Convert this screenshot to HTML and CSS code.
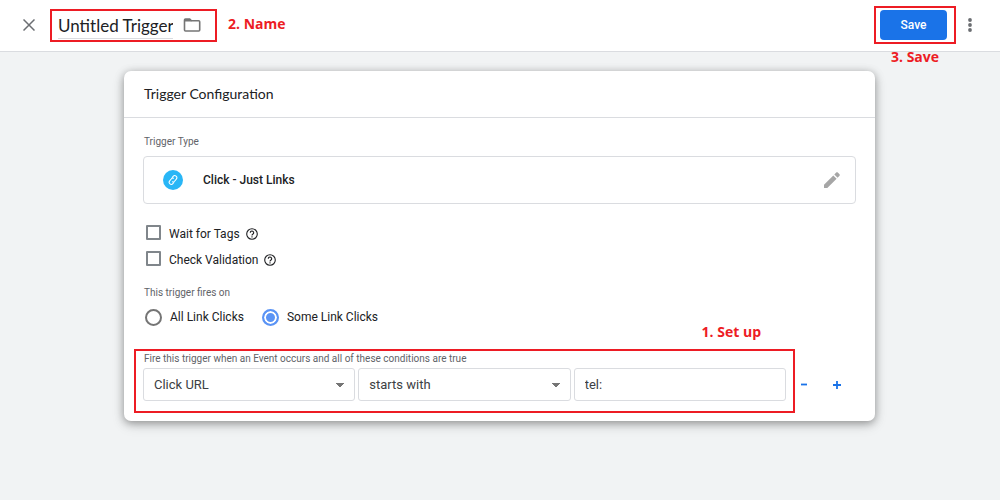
FILE: index.html
```html
<!DOCTYPE html>
<html lang="en">
<head>
    <meta charset="UTF-8">
    <meta name="viewport" content="width=device-width, initial-scale=1.0">
    <title>Untitled Trigger</title>
    <link rel="stylesheet" href="styles.css">
</head>
<body>
    <header class="topbar">
        <button class="icon-button close" type="button" aria-label="Close">
            <svg width="12" height="12" viewBox="0 0 12 12"><path d="M.5.5l11 11M11.500.5L.5 11.500" stroke="#6b6e72" stroke-width="1.500" fill="none"/></svg>
        </button>
        <div class="name-area">
            <input class="name-input" type="text" value="Untitled Trigger" aria-label="Trigger name">
            <button class="icon-button" type="button" aria-label="Choose folder">
                <svg width="18" height="14" viewBox="0 0 18 14"><path d="M1.500 12V2q0-1 1-1h4.200l1.700 1.800H15.700q1 0 1 1V12q0 1-1 1H2.500q-1 0-1-1z" stroke="#757575" stroke-width="1.600" fill="none"/><path d="M1.500 1H6.700l1.900 2.600H1.500z" fill="#757575"/></svg>
            </button>
            <span class="outline outline-name"></span>
            <span class="note note-name">2. Name</span>
        </div>
        <div class="save-area">
            <button class="save" type="button">Save</button>
            <span class="outline outline-save"></span>
            <span class="note note-save">3. Save</span>
        </div>
        <button class="icon-button more" type="button" aria-label="More options">
            <svg width="4" height="14" viewBox="0 0 4 14" fill="#6b6e72"><circle cx="2" cy="2" r="1.900"/><circle cx="2" cy="7" r="1.900"/><circle cx="2" cy="12" r="1.900"/></svg>
        </button>
    </header>

    <main class="card">
        <h1 class="card-title">Trigger Configuration</h1>
        <div class="card-body">
            <div class="label">Trigger Type</div>
            <div class="type-box">
                <svg width="20" height="20" viewBox="0 0 20 20">
                    <circle cx="10" cy="10" r="10" fill="#29b6f6"/>
                    <g transform="rotate(-50 10 10)" fill="none" stroke="#fff" stroke-width="1" stroke-linecap="round">
                        <path d="M11.800 9.300A2.100 2.100 0 0 0 10 8H7.200a2.100 2.100 0 0 0 0 4.200H8.600"/>
                        <path d="M8.200 10.700A2.100 2.100 0 0 0 10 12h2.800a2.100 2.100 0 0 0 0-4.200H11.400"/>
                    </g>
                </svg>
                <span class="type-name">Click - Just Links</span>
                <button class="icon-button" type="button" aria-label="Edit trigger type">
                    <svg width="16" height="16" viewBox="0 0 16 16" fill="#a6a6a6"><path d="M0 12.700V16h3.300L12.600 6.700 9.300 3.400zM15.500 3.800c.5-.5.5-1.100 0-1.600L13.800.5c-.5-.5-1.100-.5-1.600 0l-1.900 1.900 3.300 3.300z"/></svg>
                </button>
            </div>

            <div class="checks">
                <div class="option">
                    <input type="checkbox" id="wait">
                    <label for="wait">Wait for Tags</label>
                    <svg class="help" width="12" height="12" viewBox="0 0 12 12" fill="none" stroke="#202124" stroke-width="1.100"><circle cx="6" cy="6" r="5.300"/><path d="M4.300 4.800a1.700 1.700 0 1 1 2.700 1.300Q6 6.600 6 7.500M6 8.300v1.100"/></svg>
                </div>
                <div class="option">
                    <input type="checkbox" id="check">
                    <label for="check">Check Validation</label>
                    <svg class="help" width="12" height="12" viewBox="0 0 12 12" fill="none" stroke="#202124" stroke-width="1.100"><circle cx="6" cy="6" r="5.300"/><path d="M4.300 4.800a1.700 1.700 0 1 1 2.700 1.300Q6 6.600 6 7.500M6 8.300v1.100"/></svg>
                </div>
            </div>

            <div class="label">This trigger fires on</div>
            <div class="radios">
                <div class="option">
                    <input type="radio" name="fires" id="all">
                    <label for="all">All Link Clicks</label>
                </div>
                <div class="option">
                    <input type="radio" name="fires" id="some" checked>
                    <label for="some">Some Link Clicks</label>
                </div>
            </div>

            <div class="filter">
                <div class="conditions">
                    <div class="label">Fire this trigger when an Event occurs and all of these conditions are true</div>
                    <div class="fields">
                        <select class="field" aria-label="Variable"><option>Click URL</option></select>
                        <select class="field" aria-label="Operator"><option>starts with</option></select>
                        <input class="field" type="text" value="tel:" aria-label="Value">
                    </div>
                    <span class="outline outline-setup"></span>
                    <span class="note note-setup">1. Set up</span>
                </div>
                <div class="actions">
                    <button type="button" aria-label="Remove condition">
                        <svg width="8" height="8" viewBox="0 0 8 8"><path d="M1 3.500h6" stroke="#1a73e8" stroke-width="1.800"/></svg>
                    </button>
                    <button type="button" aria-label="Add condition">
                        <svg width="8" height="8" viewBox="0 0 8 8"><path d="M0 4h8M4 0v8" stroke="#1a73e8" stroke-width="1.800"/></svg>
                    </button>
                </div>
            </div>
        </div>
    </main>
</body>
</html>
```
FILE: styles.css
```css
* {
    box-sizing: border-box;
}

body {
    font-family: Roboto, Arial, sans-serif;
    margin: 0;
    background-color: #f1f3f4;
    color: #202124;
    font-size: 12px;
}

button,
input,
select {
    font-family: inherit;
    margin: 0;
}

.topbar {
    display: flex;
    align-items: center;
    height: 52px;
    padding: 0 26px 1px 18px;
    background-color: white;
    border-bottom: 1px solid #dadce0;
}

.icon-button {
    display: flex;
    align-items: center;
    justify-content: center;
    border: 0;
    padding: 0;
    background: none;
    cursor: pointer;
}

.close {
    width: 22px;
    height: 22px;
    margin-right: 18px;
}

.name-area {
    position: relative;
    display: flex;
    align-items: center;
    gap: 10px;
}

.name-input {
    width: 115px;
    height: 28px;
    border: 0;
    border-bottom: 1px solid #dadce0;
    padding: 2px 0 0;
    background: none;
    color: #202124;
    font-family: Lato, sans-serif;
    font-size: 17px;
}

.save-area {
    position: relative;
    margin-left: auto;
}

.save {
    display: block;
    width: 67px;
    height: 30px;
    border: 0;
    border-radius: 4px;
    background-color: #1a73e8;
    color: white;
    font-size: 12px;
    font-weight: 500;
    cursor: pointer;
}

.more {
    width: 8px;
    height: 22px;
    margin-left: 19px;
}

/* red callouts drawn over the form */
.outline {
    position: absolute;
    border: 2px solid #ed1c24;
    pointer-events: none;
}

.outline-name {
    inset: -2px -16px -3px -8px;
}

.outline-save {
    inset: -4px -9px -4px -6px;
}

.outline-setup {
    inset: -3px -9px -12px -9px;
}

.note {
    position: absolute;
    color: #ed1c24;
    font-family: "Open Sans", sans-serif;
    font-size: 14px;
    font-weight: 700;
    line-height: 18px;
    white-space: nowrap;
}

.note-name {
    top: 4px;
    left: 170px;
}

.note-save {
    top: 38px;
    left: 11px;
}

.note-setup {
    top: -29px;
    right: 25px;
}

.card {
    margin: 19px 125px 20px 124px;
    border-radius: 7px;
    background-color: white;
    box-shadow: 0 2px 8px rgba(0, 0, 0, 0.35), 0 4px 14px rgba(0, 0, 0, 0.12);
}

.card-title {
    margin: 0;
    padding: 0 20px;
    border-bottom: 1px solid #dadce0;
    font-family: Lato, sans-serif;
    font-size: 14px;
    font-weight: 400;
    line-height: 46px;
}

.card-body {
    padding: 17px 19px 20px;
}

.label {
    padding-left: 1px;
    color: #5f6368;
    font-size: 10px;
    line-height: 14px;
}

.type-box {
    display: flex;
    align-items: center;
    height: 48px;
    margin: 7px 0 15px;
    padding: 0 15px 0 19px;
    border: 1px solid #dadce0;
    border-radius: 4px;
}

.type-name {
    flex: 1;
    margin-left: 20px;
    font-weight: 500;
}

.checks {
    margin-bottom: 15px;
}

.option {
    display: flex;
    align-items: center;
    height: 26px;
    padding-left: 2px;
}

.option label {
    line-height: 14px;
}

.option input {
    appearance: none;
    width: 17px;
    height: 17px;
    margin-right: 8px;
    border: 2px solid #80868b;
    background-color: white;
}

.checks .option {
    padding-left: 3px;
}

.checks input {
    width: 15px;
    height: 15px;
    border-radius: 1px;
}

.checks label,
.help {
    margin-top: 3px;
}

.help {
    margin-left: 6px;
}

.radios {
    display: flex;
    gap: 16px;
    margin: 4px 0 22px;
}

.radios input {
    border-color: #757575;
    border-radius: 50%;
}

.radios input:checked {
    border-color: #5b94f5;
    background: #5b94f5;
    box-shadow: inset 0 0 0 2px white;
}

.filter {
    display: flex;
    align-items: flex-end;
}

.conditions {
    position: relative;
    flex: 1;
}

.fields {
    display: grid;
    grid-template-columns: repeat(3, 1fr);
    gap: 3px;
    margin-top: 2px;
}

.field {
    appearance: none;
    min-width: 0;
    height: 33px;
    border: 1px solid #dadce0;
    border-radius: 3px;
    padding: 0 10px;
    background-color: white;
    color: #3c4043;
    font-size: 13px;
}

/* small arrow at the right of the drop-downs */
select.field {
    background-image: conic-gradient(from -45deg at 50% 100%, #757575 90deg, transparent 0);
    background-position: right 10px center;
    background-size: 8px 4px;
    background-repeat: no-repeat;
}

.actions {
    display: flex;
    width: 70px;
    padding-left: 1px;
}

.actions button {
    display: flex;
    align-items: center;
    justify-content: center;
    width: 33px;
    height: 33px;
    border: 0;
    padding: 0;
    background: none;
    cursor: pointer;
}
```
